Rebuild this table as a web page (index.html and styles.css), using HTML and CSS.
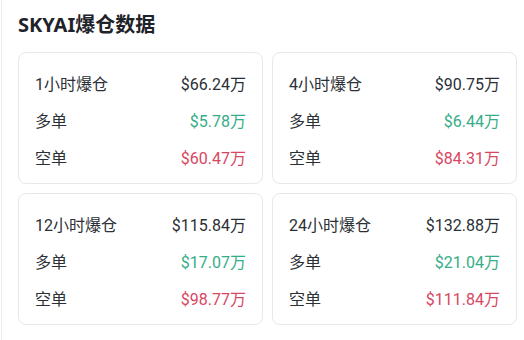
FILE: index.html
```html
<!DOCTYPE html>
<html lang="zh">
<head>
<meta charset="utf-8">
<link rel="stylesheet" href="styles.css">
</head>
<body>
<div class="panel">
  <h2 class="title">SKYAI爆仓数据</h2>
  <div class="grid">
    <div class="card">
      <div class="row"><span class="label">1小时爆仓</span><span class="val">$66.24万</span></div>
      <div class="row"><span class="label">多单</span><span class="val up">$5.78万</span></div>
      <div class="row"><span class="label">空单</span><span class="val down">$60.47万</span></div>
    </div>
    <div class="card">
      <div class="row"><span class="label">4小时爆仓</span><span class="val">$90.75万</span></div>
      <div class="row"><span class="label">多单</span><span class="val up">$6.44万</span></div>
      <div class="row"><span class="label">空单</span><span class="val down">$84.31万</span></div>
    </div>
    <div class="card">
      <div class="row"><span class="label">12小时爆仓</span><span class="val">$115.84万</span></div>
      <div class="row"><span class="label">多单</span><span class="val up">$17.07万</span></div>
      <div class="row"><span class="label">空单</span><span class="val down">$98.77万</span></div>
    </div>
    <div class="card">
      <div class="row"><span class="label">24小时爆仓</span><span class="val">$132.88万</span></div>
      <div class="row"><span class="label">多单</span><span class="val up">$21.04万</span></div>
      <div class="row"><span class="label">空单</span><span class="val down">$111.84万</span></div>
    </div>
  </div>
</div>
</body>
</html>
```

FILE: styles.css
```css
html, body {
  margin: 0;
  padding: 0;
  background: #ffffff;
}
body {
  font-family: Roboto, "Noto Sans CJK SC", sans-serif;
  color: #2b2f36;
}
.panel {
  margin-left: 1px;
  border-left: 1px solid #ececec;
  padding-left: 16px;
  height: 340px;
  box-sizing: border-box;
  padding-top: 11px;
}
.title {
  margin: 0 0 13px 0;
  font-size: 20px;
  line-height: 28px;
  font-weight: 700;
  color: #1e2329;
  font-family: "Noto Sans", "Noto Sans CJK SC", sans-serif;
}
.grid {
  display: grid;
  grid-template-columns: 245px 245px;
  grid-auto-rows: 132px;
  gap: 9px;
}
.card {
  border: 1px solid #e8e8e8;
  border-radius: 8px;
  box-sizing: border-box;
  padding: 11px 16px 0 16px;
  display: flex;
  flex-direction: column;
}
.row {
  height: 37px;
  display: flex;
  align-items: center;
  justify-content: space-between;
  font-size: 16px;
}
.label {
  color: #2b2f36;
}
.val {
  color: #2b2f36;
}
.up {
  color: #35ad88;
}
.down {
  color: #d8465f;
}
```
